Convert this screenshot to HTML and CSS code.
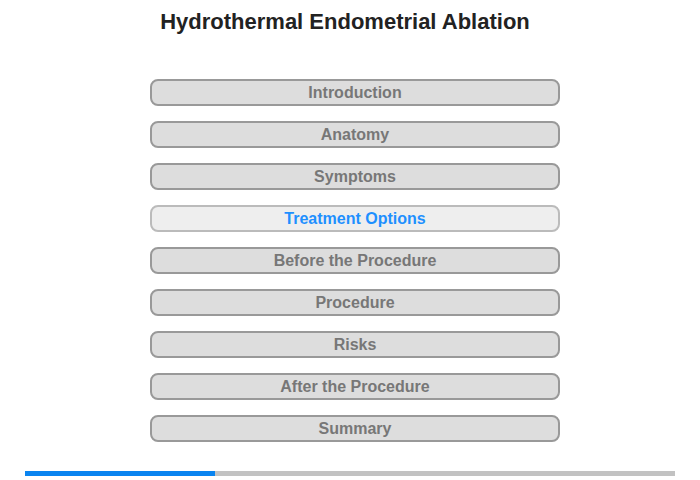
FILE: index.html
```html
<!DOCTYPE html>
<html lang="en">

<head>
    <meta charset="UTF-8">
    <meta name="viewport" content="width=device-width, initial-scale=1.0">
    <title>Hydrothermal Endometrial Ablation</title>
    <link rel="stylesheet" href="styles.css">
</head>

<body>
    <div class="page">
        <h1 class="title">Hydrothermal Endometrial Ablation</h1>
        <nav class="menu">
            <a class="menu-item" href="#">Introduction</a>
            <a class="menu-item" href="#">Anatomy</a>
            <a class="menu-item" href="#">Symptoms</a>
            <a class="menu-item active" href="#">Treatment Options</a>
            <a class="menu-item" href="#">Before the Procedure</a>
            <a class="menu-item" href="#">Procedure</a>
            <a class="menu-item" href="#">Risks</a>
            <a class="menu-item" href="#">After the Procedure</a>
            <a class="menu-item" href="#">Summary</a>
        </nav>
        <div class="progress">
            <div class="progress-fill" style="width: 29.2%;"></div>
        </div>
    </div>
</body>

</html>
```

FILE: styles.css
```css
* {
    margin: 0;
    padding: 0;
    box-sizing: border-box;
}

body {
    font-family: "Liberation Sans", Arial, sans-serif;
    background-color: #fff;
}

.page {
    width: 700px;
    height: 480px;
    padding-top: 10px;
}

.title {
    font-size: 22px;
    line-height: 24px;
    color: #222;
    text-align: center;
    padding-right: 10px;
}

/* Chapter list */
.menu {
    display: flex;
    flex-direction: column;
    gap: 15px;
    width: 410px;
    margin: 45px 0 0 150px;
}

.menu-item {
    display: block;
    height: 27px;
    line-height: 23px;
    border: 2px solid #999;
    border-radius: 8px;
    background-color: #ddd;
    color: #777;
    font-size: 16px;
    font-weight: bold;
    text-align: center;
    text-decoration: none;
}

.menu-item.active {
    background-color: #eee;
    border-color: #bbb;
    color: #1e90ff;
}

.progress {
    width: 650px;
    height: 5px;
    margin: 29px 0 0 25px;
    background-color: #c2c2c2;
}

.progress-fill {
    height: 100%;
    background-color: #0a84f0;
}
```
